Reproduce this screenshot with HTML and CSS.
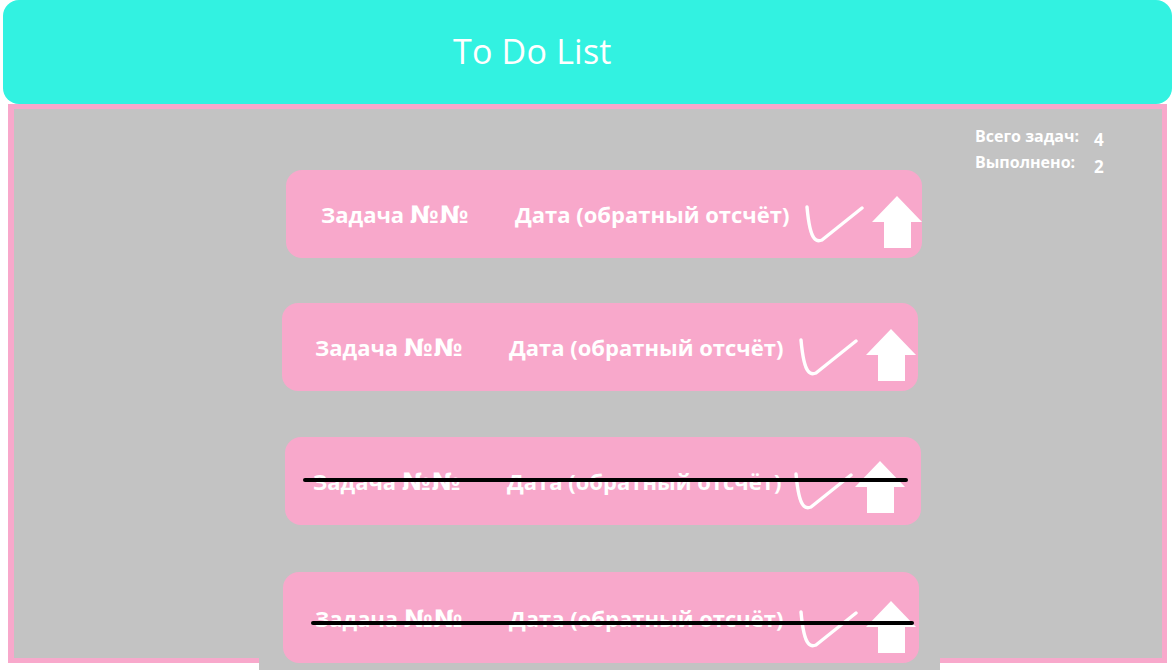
FILE: index.html
```html
<!DOCTYPE html>
<html lang="ru">
<head>
<meta charset="utf-8">
<title>To Do List</title>
<link rel="stylesheet" href="styles.css">
</head>
<body>
<header class="header">
  <h1 class="title">To Do List</h1>
</header>
<main class="panel">
  <ul class="list">
    <li class="card card--1">
      <span class="task">Задача <span class="num">№№</span></span>
      <span class="date">Дата (обратный отсчёт)</span>
      <svg class="check" viewBox="0 0 62 40" width="62" height="40"><path d="M3 3 C4 14 6 29 10 34 Q13 38 18 36 L58 4"/></svg>
      <svg class="arrow" viewBox="0 0 50 52" width="50" height="52"><polygon points="25,0 50,26 39,26 39,52 12,52 12,26 0,26"/></svg>
    </li>
    <li class="card card--2">
      <span class="task">Задача <span class="num">№№</span></span>
      <span class="date">Дата (обратный отсчёт)</span>
      <svg class="check" viewBox="0 0 62 40" width="62" height="40"><path d="M3 3 C4 14 6 29 10 34 Q13 38 18 36 L58 4"/></svg>
      <svg class="arrow" viewBox="0 0 50 52" width="50" height="52"><polygon points="25,0 50,26 39,26 39,52 12,52 12,26 0,26"/></svg>
    </li>
    <li class="card card--3 card--done">
      <span class="task">Задача <span class="num">№№</span></span>
      <span class="date">Дата (обратный отсчёт)</span>
      <svg class="check" viewBox="0 0 62 40" width="62" height="40"><path d="M3 3 C4 14 6 29 10 34 Q13 38 18 36 L58 4"/></svg>
      <svg class="arrow" viewBox="0 0 50 52" width="50" height="52"><polygon points="25,0 50,26 39,26 39,52 12,52 12,26 0,26"/></svg>
    </li>
    <li class="card card--4 card--done">
      <span class="task">Задача <span class="num">№№</span></span>
      <span class="date">Дата (обратный отсчёт)</span>
      <svg class="check" viewBox="0 0 62 40" width="62" height="40"><path d="M3 3 C4 14 6 29 10 34 Q13 38 18 36 L58 4"/></svg>
      <svg class="arrow" viewBox="0 0 50 52" width="50" height="52"><polygon points="25,0 50,26 39,26 39,52 12,52 12,26 0,26"/></svg>
    </li>
  </ul>
  <dl class="stats">
    <dt class="stats__label">Всего задач:</dt>
    <dd class="stats__value">4</dd>
    <dt class="stats__label">Выполнено:</dt>
    <dd class="stats__value stats__value--low">2</dd>
  </dl>
</main>
</body>
</html>
```

FILE: styles.css
```css
html, body {
  margin: 0;
  padding: 0;
  background: #ffffff;
  overflow: hidden;
  height: 670px;
}

body {
  font-family: "Open Sans", "Liberation Sans", sans-serif;
}

.header {
  margin: 0 3px;
  height: 104px;
  background: #32f2e1;
  border-radius: 16px;
  display: flex;
  align-items: center;
  padding-left: 450px;
  box-sizing: border-box;
}

.title {
  margin: 0;
  font-weight: 400;
  font-size: 34px;
  line-height: 1;
  color: #ffffff;
  padding-bottom: 3px;
  letter-spacing: 0.2px;
}

.panel {
  margin-left: 8px;
  width: 1159px;
  height: 559px;
  box-sizing: border-box;
  background: #c3c3c3;
  border: 5px solid #f8a8cb;
  border-left-width: 6px;
  display: flex;
  align-items: flex-start;
}

.list {
  list-style: none;
  margin: 0 0 0 245px;
  padding: 61px 0 7px;
  width: 681px;
  flex: none;
  background: #c3c3c3;
  display: flex;
  flex-direction: column;
}

.card {
  position: relative;
  width: 636px;
  height: 88px;
  box-sizing: border-box;
  background: #f8a8cb;
  border-radius: 16px;
  display: flex;
  align-items: center;
  color: #ffffff;
  font-weight: 700;
  font-size: 22px;
  padding-left: 35px;
}

.card--1 { margin-left: 27px; }
.card--2 { margin-left: 23px; margin-top: 45px; padding-left: 33px; }
.card--3 { margin-left: 26px; margin-top: 46px; padding-left: 28px; }
.card--4 { margin-left: 24px; margin-top: 47px; height: 91px; padding-left: 32px; }

.task {
  width: 194px;
  flex: none;
  white-space: nowrap;
}

.num {
  font-family: "DejaVu Sans", "Open Sans", sans-serif;
  font-size: 24px;
  letter-spacing: 1px;
  line-height: 1;
}

.date {
  width: 289px;
  flex: none;
  white-space: nowrap;
}

.card--3 .date { width: 286px; }

.check {
  flex: none;
  align-self: flex-end;
  margin-bottom: 14px;
}

.check path {
  fill: none;
  stroke: #ffffff;
  stroke-width: 3.4;
  stroke-linecap: round;
  stroke-linejoin: round;
}

.arrow {
  flex: none;
  align-self: flex-end;
  margin-bottom: 10px;
  margin-left: 6px;
}

.arrow polygon {
  fill: #ffffff;
}

.card--3 .arrow { margin-left: 0; margin-bottom: 12px; }

.card--done::after {
  content: "";
  position: absolute;
  left: 18px;
  right: 13px;
  top: 41px;
  height: 4px;
  border-radius: 2px;
  background: #000000;
}

.card--4::after {
  left: 28px;
  right: 5px;
  top: 49px;
}

.stats {
  margin: 16px 0 0 35px;
  display: grid;
  grid-template-columns: 119px auto;
  row-gap: 0;
  color: #ffffff;
  font-weight: 700;
}

.stats__label {
  font-size: 16px;
  line-height: 22px;
  margin: 0;
}

.stats__value {
  font-size: 17px;
  line-height: 22px;
  margin: 0;
  padding-top: 4px;
}

.stats__value--low {
  padding-top: 5px;
}
```
